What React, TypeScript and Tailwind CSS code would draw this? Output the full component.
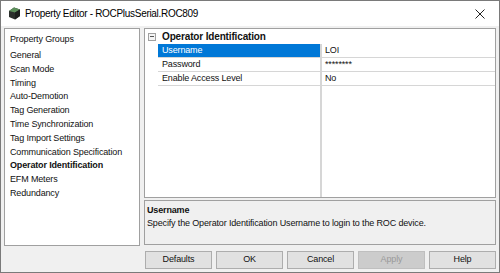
const groups = [
  "General",
  "Scan Mode",
  "Timing",
  "Auto-Demotion",
  "Tag Generation",
  "Time Synchronization",
  "Tag Import Settings",
  "Communication Specification",
  "Operator Identification",
  "EFM Meters",
  "Redundancy",
];

const rows = [
  { name: "Username", value: "LOI", selected: true },
  { name: "Password", value: "********" },
  { name: "Enable Access Level", value: "No" },
];

const buttons = ["Defaults", "OK", "Cancel", "Apply", "Help"];

function AppIcon() {
  return (
    <svg width="15" height="15" viewBox="0 0 15 15">
      <path d="M2 5 L7 1.5 L13 3.5 L13 10 L8 13.5 L2 11 Z" fill="#2b2f2c" />
      <path d="M2 5 L7 1.5 L13 3.5 L8 6.5 Z" fill="#5c8f5a" />
      <path d="M8 6.5 L13 3.5 L13 10 L8 13.5 Z" fill="#1c1f1d" />
    </svg>
  );
}

export default function App() {
  return (
    <div
      className="flex h-[273px] w-[500px] flex-col border border-[#7a7a7a] bg-[#f0f0f0] text-[9px] tracking-[-0.15px] text-[#111]"
      style={{ fontFamily: '"Liberation Sans", Arial, sans-serif' }}
    >
      {/* title bar */}
      <div className="flex h-[25px] items-center bg-white pl-[6px] pr-[14px]">
        <AppIcon />
        <span className="ml-[3px] text-[10px] tracking-[-0.3px] text-black">Property Editor - ROCPlusSerial.ROC809</span>
        <svg className="ml-auto" width="10" height="10" viewBox="0 0 10 10">
          <path d="M0.5 0.5 L9.5 9.5 M9.5 0.5 L0.5 9.5" stroke="#222" strokeWidth="1" />
        </svg>
      </div>

      <div className="mt-[2px] flex gap-[4px] px-[3px]">
        {/* property groups */}
        <div className="h-[218px] w-[136px] border border-[#a0a0a0] bg-white pl-[5px] pt-[3px]">
          <div className="mb-[3px] leading-[14px]">Property Groups</div>
          {groups.map((g) => (
            <div
              key={g}
              className={g === "Operator Identification" ? "font-bold leading-[13.8px]" : "leading-[13.8px]"}
            >
              {g}
            </div>
          ))}
        </div>

        <div className="flex flex-1 flex-col">
          {/* grid */}
          <div className="flex h-[170px] border border-[#a0a0a0] bg-white">
            <div className="w-[13px] shrink-0">
              <div className="flex h-[15px] items-center justify-center">
                <div className="flex h-[8px] w-[8px] items-center justify-center border border-[#a0a0a0] bg-[#f4f4f4]">
                  <div className="h-[1px] w-[4px] bg-[#555]" />
                </div>
              </div>
            </div>
            <div className="flex flex-1 flex-col">
              <div className="flex h-[15px] items-center pl-[4px] text-[10px] font-bold">Operator Identification</div>
              {rows.map((r) => (
                <div key={r.name} className="flex h-[14px] border-b border-[#d6d6d6]">
                  <div
                    className={
                      r.selected
                        ? "flex w-[162px] items-center bg-[#0078d7] pl-[4px] text-white"
                        : "flex w-[162px] items-center pl-[4px]"
                    }
                  >
                    {r.name}
                  </div>
                  <div className="flex flex-1 items-center border-l-2 border-[#d6d6d6] pl-[3px]">{r.value}</div>
                </div>
              ))}
              <div className="flex flex-1">
                <div className="w-[162px]" />
                <div className="flex-1 border-l-2 border-[#d6d6d6]" />
              </div>
            </div>
          </div>

          {/* description */}
          <div className="mt-[2px] h-[45px] border border-[#a0a0a0] bg-[#f0f0f0] pl-[2px] pt-[3px]">
            <div className="font-bold leading-[13px]">Username</div>
            <div className="leading-[13px]">Specify the Operator Identification Username to login to the ROC device.</div>
          </div>
        </div>
      </div>

      {/* buttons */}
      <div className="mt-[5px] flex justify-end gap-[4px] pr-[3px]">
        {buttons.map((b) => (
          <div
            key={b}
            className={
              b === "Apply"
                ? "flex h-[18px] w-[67px] items-center justify-center border border-[#bfbfbf] bg-[#cccccc] text-[#9a9a9a]"
                : "flex h-[18px] w-[67px] items-center justify-center border border-[#adadad] bg-[#e1e1e1]"
            }
          >
            {b}
          </div>
        ))}
      </div>
    </div>
  );
}
